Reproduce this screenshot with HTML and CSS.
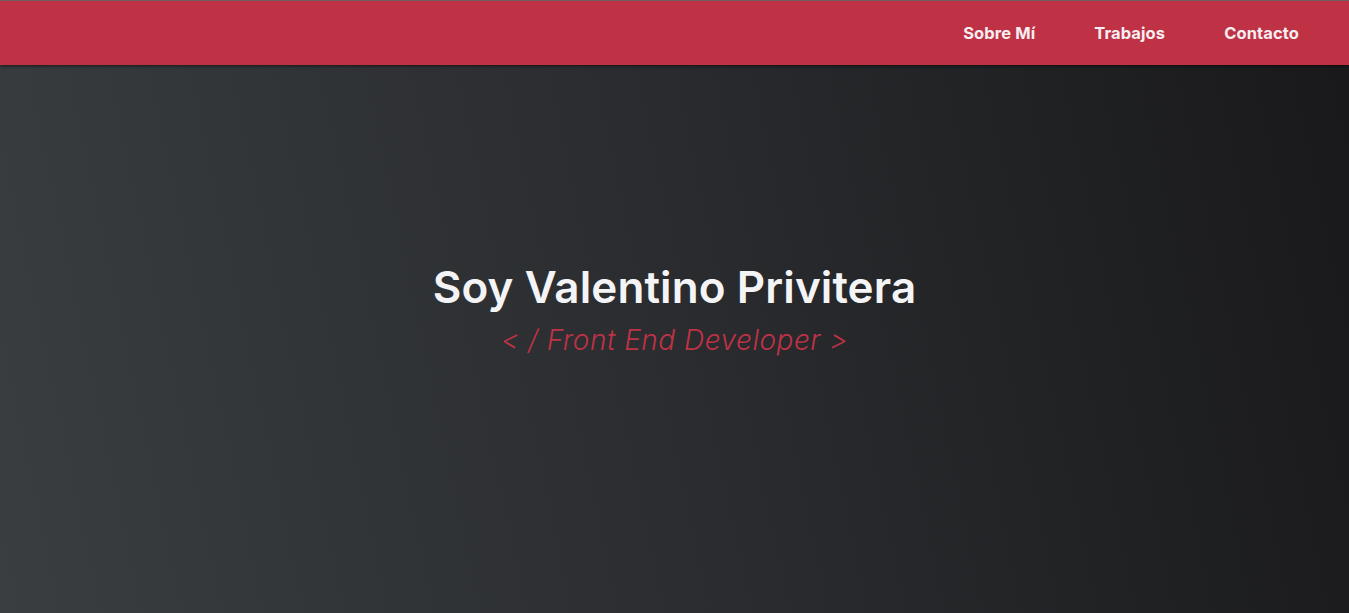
FILE: index.html
```html
<!DOCTYPE html>
<html lang="es">
<head>
<meta charset="utf-8">
<title>Valentino Privitera</title>
<link rel="stylesheet" href="styles.css">
</head>
<body>
<header class="header">
  <nav class="nav">
    <a class="nav-link" href="#">Sobre Mí</a>
    <a class="nav-link" href="#">Trabajos</a>
    <a class="nav-link" href="#">Contacto</a>
  </nav>
</header>
<main class="hero">
  <div class="hero-text">
    <h1 class="hero-title">Soy Valentino Privitera</h1>
    <p class="hero-sub">&lt; / Front End Developer &gt;</p>
  </div>
</main>
</body>
</html>
```
FILE: styles.css
```css
* { box-sizing: border-box; }
html, body { margin: 0; padding: 0; height: 100%; }
body {
  font-family: "Inter", "Open Sans", sans-serif;
  background: #2a2c2f;
  display: flex;
  flex-direction: column;
  overflow: hidden;
}
.header {
  height: 65px;
  background: #bf3246;
  border-top: 1px solid #6e5d61;
  box-shadow: 0 1px 3px rgba(0,0,0,0.6);
  display: flex;
  justify-content: flex-end;
  align-items: center;
  padding-right: 50px;
  position: relative;
  z-index: 1;
}
.nav {
  display: flex;
  gap: 59px;
}
.nav-link {
  color: #f6eef0;
  text-decoration: none;
  font-weight: 700;
  font-size: 16.5px;
  letter-spacing: 0.1px;
}
.hero {
  flex: 1;
  background: linear-gradient(78deg, #3a3e41 0%, #2a2c2f 50%, #19191b 100%);
  display: flex;
  justify-content: center;
  align-items: flex-start;
  padding-top: 196px;
}
.hero-text { text-align: center; }
.hero-title {
  margin: 0;
  color: #f4f4f6;
  font-size: 44px;
  font-weight: 600;
  line-height: 52px;
  letter-spacing: 0.1px;
}
.hero-sub {
  margin: 0;
  color: #bf3246;
  font-size: 28px;
  font-weight: 300;
  font-style: italic;
  line-height: 48px;
  letter-spacing: 0.5px;
  padding-top: 3px;
}
```
